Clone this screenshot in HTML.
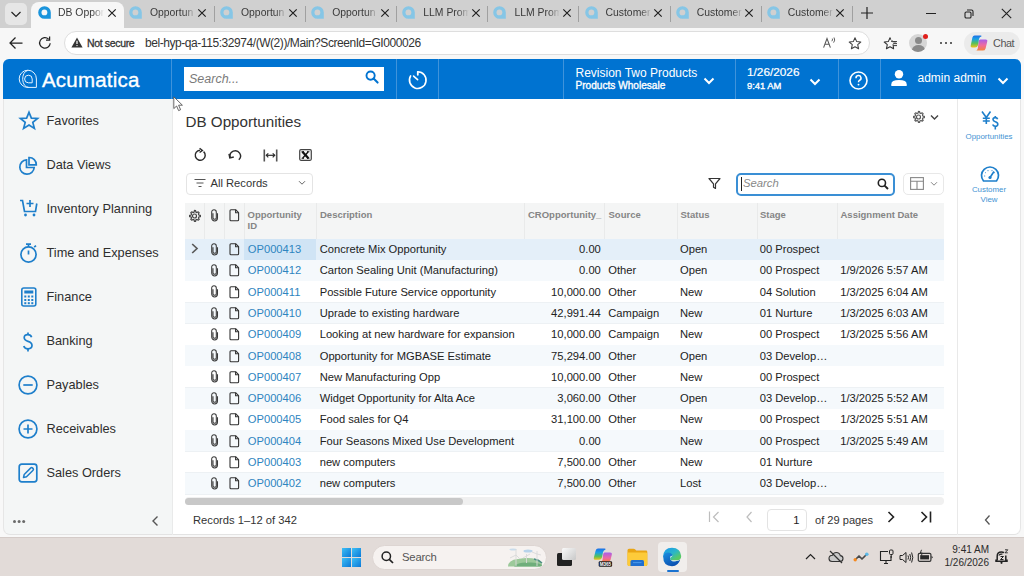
<!DOCTYPE html>
<html><head><meta charset="utf-8">
<style>
*{box-sizing:border-box;margin:0;padding:0}
html,body{width:1024px;height:576px;overflow:hidden;font-family:"Liberation Sans",sans-serif;background:#f8f8f8;position:relative}
.a{position:absolute;white-space:nowrap}
svg.a{overflow:visible}
#tabs{position:absolute;left:0;top:0;width:1024px;height:28px;background:#d0d0d0}
.tabt{font-size:10.4px;color:#3a3a3a;width:46px;overflow:hidden;-webkit-mask-image:linear-gradient(to right,#000 75%,transparent 100%)}
#addr{position:absolute;left:0;top:28px;width:1024px;height:31px;background:#f7f7f7}
#hdr{position:absolute;left:3px;top:59px;width:1018px;height:40px;background:#0073d1;border-radius:6px 6px 0 0}
#side{position:absolute;left:3px;top:99px;width:169.5px;height:436px;background:#f4f6f6;border-radius:0 0 0 7px;border-right:1px solid #e9eaea;border-left:1px solid #e6e6e6;border-bottom:1px solid #e3e3e3}
#main{position:absolute;left:172.5px;top:99px;width:784.5px;height:436px;background:#fff;border-bottom:1px solid #e3e3e3}
#rp{position:absolute;left:957px;top:99px;width:64px;height:436px;background:#fff;border-left:1px solid #e9e9e9;border-right:1px solid #e6e6e6;border-bottom:1px solid #e3e3e3;border-radius:0 0 7px 0}
#task{position:absolute;left:0;top:538px;width:1024px;height:38px;background:#e2dbd8}
.sit{font-size:12.75px;color:#2e2e2e;line-height:15px}
.gh{font-size:9.5px;font-weight:bold;color:#858585;line-height:11px}
.gc{font-size:11.18px;color:#222;line-height:13px}
.lk{color:#2e84c0}
.rpt{font-size:7.9px;color:#3f93d3;line-height:10px}

</style></head><body>
<div id="tabs">
<div class="a" style="left:31px;top:2px;width:93px;height:27px;background:#f7f7f7;border-radius:8px 8px 0 0"></div>
<svg class="a" style="left:37.5px;top:6.0px" width="13" height="13" viewBox="0 0 13 13"><path d="M6.5 0.2A6.3 6.3 0 1 0 6.5 12.8H12.8V6.5A6.3 6.3 0 0 0 6.5 0.2Z" fill="#1a94dc"/><circle cx="6.4" cy="6.4" r="2.9" fill="#f7f7f7"/></svg>
<div class="a tabt" style="left:58px;top:6.5px">DB Oppor</div>
<svg class="a" style="left:106.5px;top:8.0px" width="10" height="10" viewBox="0 0 10 10"><path d="M1.3 1.3L8.7 8.7M8.7 1.3L1.3 8.7" stroke="#1e1e1e" stroke-width="1.15"/></svg>
<svg class="a" style="left:128.9px;top:6.0px" width="13" height="13" viewBox="0 0 13 13"><path d="M6.5 0.2A6.3 6.3 0 1 0 6.5 12.8H12.8V6.5A6.3 6.3 0 0 0 6.5 0.2Z" fill="#86c6e6"/><circle cx="6.4" cy="6.4" r="2.9" fill="#d0d0d0"/></svg>
<div class="a tabt" style="left:149.9px;top:6.5px">Opportun</div>
<svg class="a" style="left:197.2px;top:8.0px" width="10" height="10" viewBox="0 0 10 10"><path d="M1.3 1.3L8.7 8.7M8.7 1.3L1.3 8.7" stroke="#1e1e1e" stroke-width="1.15"/></svg>
<div class="a" style="left:213.9px;top:6px;width:1px;height:16px;background:#a0a0a0"></div>
<svg class="a" style="left:220.0px;top:6.0px" width="13" height="13" viewBox="0 0 13 13"><path d="M6.5 0.2A6.3 6.3 0 1 0 6.5 12.8H12.8V6.5A6.3 6.3 0 0 0 6.5 0.2Z" fill="#86c6e6"/><circle cx="6.4" cy="6.4" r="2.9" fill="#d0d0d0"/></svg>
<div class="a tabt" style="left:241.0px;top:6.5px">Opportun</div>
<svg class="a" style="left:288.3px;top:8.0px" width="10" height="10" viewBox="0 0 10 10"><path d="M1.3 1.3L8.7 8.7M8.7 1.3L1.3 8.7" stroke="#1e1e1e" stroke-width="1.15"/></svg>
<div class="a" style="left:305.0px;top:6px;width:1px;height:16px;background:#a0a0a0"></div>
<svg class="a" style="left:311.2px;top:6.0px" width="13" height="13" viewBox="0 0 13 13"><path d="M6.5 0.2A6.3 6.3 0 1 0 6.5 12.8H12.8V6.5A6.3 6.3 0 0 0 6.5 0.2Z" fill="#86c6e6"/><circle cx="6.4" cy="6.4" r="2.9" fill="#d0d0d0"/></svg>
<div class="a tabt" style="left:332.2px;top:6.5px">Opportun</div>
<svg class="a" style="left:379.5px;top:8.0px" width="10" height="10" viewBox="0 0 10 10"><path d="M1.3 1.3L8.7 8.7M8.7 1.3L1.3 8.7" stroke="#1e1e1e" stroke-width="1.15"/></svg>
<div class="a" style="left:396.2px;top:6px;width:1px;height:16px;background:#a0a0a0"></div>
<svg class="a" style="left:402.3px;top:6.0px" width="13" height="13" viewBox="0 0 13 13"><path d="M6.5 0.2A6.3 6.3 0 1 0 6.5 12.8H12.8V6.5A6.3 6.3 0 0 0 6.5 0.2Z" fill="#86c6e6"/><circle cx="6.4" cy="6.4" r="2.9" fill="#d0d0d0"/></svg>
<div class="a tabt" style="left:423.3px;top:6.5px">LLM Prom</div>
<svg class="a" style="left:470.6px;top:8.0px" width="10" height="10" viewBox="0 0 10 10"><path d="M1.3 1.3L8.7 8.7M8.7 1.3L1.3 8.7" stroke="#1e1e1e" stroke-width="1.15"/></svg>
<div class="a" style="left:487.3px;top:6px;width:1px;height:16px;background:#a0a0a0"></div>
<svg class="a" style="left:493.4px;top:6.0px" width="13" height="13" viewBox="0 0 13 13"><path d="M6.5 0.2A6.3 6.3 0 1 0 6.5 12.8H12.8V6.5A6.3 6.3 0 0 0 6.5 0.2Z" fill="#86c6e6"/><circle cx="6.4" cy="6.4" r="2.9" fill="#d0d0d0"/></svg>
<div class="a tabt" style="left:514.4px;top:6.5px">LLM Prom</div>
<svg class="a" style="left:561.7px;top:8.0px" width="10" height="10" viewBox="0 0 10 10"><path d="M1.3 1.3L8.7 8.7M8.7 1.3L1.3 8.7" stroke="#1e1e1e" stroke-width="1.15"/></svg>
<div class="a" style="left:578.4px;top:6px;width:1px;height:16px;background:#a0a0a0"></div>
<svg class="a" style="left:584.5px;top:6.0px" width="13" height="13" viewBox="0 0 13 13"><path d="M6.5 0.2A6.3 6.3 0 1 0 6.5 12.8H12.8V6.5A6.3 6.3 0 0 0 6.5 0.2Z" fill="#86c6e6"/><circle cx="6.4" cy="6.4" r="2.9" fill="#d0d0d0"/></svg>
<div class="a tabt" style="left:605.5px;top:6.5px">Customer</div>
<svg class="a" style="left:652.8px;top:8.0px" width="10" height="10" viewBox="0 0 10 10"><path d="M1.3 1.3L8.7 8.7M8.7 1.3L1.3 8.7" stroke="#1e1e1e" stroke-width="1.15"/></svg>
<div class="a" style="left:669.5px;top:6px;width:1px;height:16px;background:#a0a0a0"></div>
<svg class="a" style="left:675.7px;top:6.0px" width="13" height="13" viewBox="0 0 13 13"><path d="M6.5 0.2A6.3 6.3 0 1 0 6.5 12.8H12.8V6.5A6.3 6.3 0 0 0 6.5 0.2Z" fill="#86c6e6"/><circle cx="6.4" cy="6.4" r="2.9" fill="#d0d0d0"/></svg>
<div class="a tabt" style="left:696.7px;top:6.5px">Customer</div>
<svg class="a" style="left:744.0px;top:8.0px" width="10" height="10" viewBox="0 0 10 10"><path d="M1.3 1.3L8.7 8.7M8.7 1.3L1.3 8.7" stroke="#1e1e1e" stroke-width="1.15"/></svg>
<div class="a" style="left:760.7px;top:6px;width:1px;height:16px;background:#a0a0a0"></div>
<svg class="a" style="left:766.8px;top:6.0px" width="13" height="13" viewBox="0 0 13 13"><path d="M6.5 0.2A6.3 6.3 0 1 0 6.5 12.8H12.8V6.5A6.3 6.3 0 0 0 6.5 0.2Z" fill="#86c6e6"/><circle cx="6.4" cy="6.4" r="2.9" fill="#d0d0d0"/></svg>
<div class="a tabt" style="left:787.8px;top:6.5px">Customer</div>
<svg class="a" style="left:835.1px;top:8.0px" width="10" height="10" viewBox="0 0 10 10"><path d="M1.3 1.3L8.7 8.7M8.7 1.3L1.3 8.7" stroke="#1e1e1e" stroke-width="1.15"/></svg>
<div class="a" style="left:851.8px;top:6px;width:1px;height:16px;background:#a0a0a0"></div>
<div class="a" style="left:5px;top:3px;width:22px;height:22px;background:#e6e6e6;border-radius:5px"></div>
<svg class="a" style="left:10px;top:9px" width="12" height="10" viewBox="0 0 12 10"><path d="M1.5 3L6 7.5L10.5 3" stroke="#222" stroke-width="1.2" fill="none"/></svg>
<svg class="a" style="left:860px;top:6px" width="14" height="14" viewBox="0 0 14 14"><path d="M7 1V13M1 7H13" stroke="#222" stroke-width="1.2"/></svg>
<div class="a" style="left:926px;top:13px;width:10px;height:1px;background:#222"></div>
<svg class="a" style="left:964px;top:9px" width="10" height="10" viewBox="0 0 10 10"><rect x="1" y="3" width="6" height="6" rx="1.3" stroke="#222" fill="none" stroke-width="1.1"/><path d="M3 1H7.5Q9 1 9 2.5V7" stroke="#222" fill="none" stroke-width="1.1"/></svg>
<svg class="a" style="left:1000.5px;top:8px" width="11" height="11" viewBox="0 0 11 11"><path d="M0.8 0.8L10.2 10.2M10.2 0.8L0.8 10.2" stroke="#222" stroke-width="1.1"/></svg>

</div>
<div id="addr"></div>
<svg class="a" style="left:8px;top:35px" width="16" height="16" viewBox="0 0 16 16"><path d="M14.5 8H2M7.5 2.5L2 8L7.5 13.5" stroke="#222" stroke-width="1.25" fill="none"/></svg>
<svg class="a" style="left:37px;top:35px" width="16" height="16" viewBox="0 0 16 16"><path d="M13.2 8.3A5.3 5.3 0 1 1 11.6 4.1" stroke="#222" stroke-width="1.25" fill="none"/><path d="M12.6 1.6V5.2H9" stroke="#222" stroke-width="1.25" fill="none"/></svg>
<div class="a" style="left:64px;top:31px;width:806px;height:24px;background:#fff;border:1px solid #dedede;border-radius:12px"></div>
<svg class="a" style="left:71px;top:37px" width="12" height="11" viewBox="0 0 12 11"><path d="M6 0.5L11.6 10.5H0.4Z" fill="#333"/><path d="M6 3.8V7" stroke="#fff" stroke-width="1.2"/><circle cx="6" cy="8.6" r="0.7" fill="#fff"/></svg>
<div class="a" style="left:87px;top:37px;font-size:10.5px;color:#333;letter-spacing:-0.35px;-webkit-text-stroke:0.3px #333">Not secure</div>
<div class="a" style="left:145px;top:36px;font-size:12px;color:#333;letter-spacing:-0.44px">bel-hyp-qa-115:32974/(W(2))/Main?ScreenId=GI000026</div>
<svg class="a" style="left:823px;top:38px" width="9" height="10" viewBox="0 0 9 10"><path d="M0.6 9.6L4 0.6L7.4 9.6M1.9 6.3H6.1" stroke="#555" stroke-width="1.05" fill="none"/></svg>
<svg class="a" style="left:830.5px;top:36.5px" width="6" height="7" viewBox="0 0 6 7"><path d="M0.8 4.2Q2 3 1.3 1.6M2.6 5.6Q4.6 3.2 3 0.5" stroke="#555" stroke-width="0.95" fill="none"/></svg>
<svg class="a" style="left:847.5px;top:37px" width="14" height="13" viewBox="0 0 14 13"><path d="M7 0.8L8.7 4.6L12.8 5L9.7 7.7L10.6 11.8L7 9.7L3.4 11.8L4.3 7.7L1.2 5L5.3 4.6Z" stroke="#444" stroke-width="1.05" fill="none" stroke-linejoin="round"/></svg>
<svg class="a" style="left:882.5px;top:37px" width="15" height="13" viewBox="0 0 15 13"><path d="M9.2 3.2L8.7 4.6L12.8 5M10 7.3L10.6 11.8L7 9.7L3.4 11.8L4.3 7.7L1.2 5L5.3 4.6L7 0.8L7.8 2.6" stroke="#333" stroke-width="1.05" fill="none" stroke-linejoin="round"/><path d="M10.2 4.6H14M10.2 6.6H14M10.2 8.6H14" stroke="#333" stroke-width="0.95"/></svg>
<div class="a" style="left:909px;top:34px;width:18px;height:18px;border-radius:50%;background:#d6d6d6;overflow:hidden"><div class="a" style="left:5.5px;top:3px;width:7px;height:7px;border-radius:50%;background:#8a8a8a"></div><div class="a" style="left:2.5px;top:11px;width:13px;height:10px;border-radius:50%;background:#8a8a8a"></div></div>
<div class="a" style="left:922.5px;top:33.5px;width:5px;height:5px;border-radius:50%;background:#e0201c"></div>
<div class="a" style="left:940px;top:42px;width:2.2px;height:2.2px;border-radius:50%;background:#333;box-shadow:5px 0 0 #333,10px 0 0 #333"></div>
<div class="a" style="left:963.5px;top:31.5px;width:56px;height:23px;background:#ebebeb;border-radius:12px"></div>
<svg class="a" style="left:969.5px;top:35px" width="18" height="16" viewBox="0 0 18 16"><defs><linearGradient id="cpa" x1="0" y1="0" x2="0" y2="1"><stop offset="0" stop-color="#1e6fe6"/><stop offset="0.3" stop-color="#1aa0e6"/><stop offset="0.65" stop-color="#56c05a"/><stop offset="1" stop-color="#f2c21a"/></linearGradient><linearGradient id="cpb" x1="0" y1="0" x2="0" y2="1"><stop offset="0" stop-color="#a85ee8"/><stop offset="0.5" stop-color="#ee6aa0"/><stop offset="1" stop-color="#f7823a"/></linearGradient></defs><path d="M10.2 4.6H15.6Q17.8 4.6 17.2 6.8L15.6 13.4Q15 15.6 12.8 15.6H5.4Q7.2 15.6 7.8 13.4L8.6 6.2Q9 4.6 10.2 4.6Z" fill="url(#cpb)"/><path d="M4.6 0.4H10.6Q12 0.4 11.4 1.6Q9.6 1.8 9 4L8 10.2Q7.4 12.4 5 12.4H2.4Q0.2 12.4 0.8 10.2L2.4 2.6Q3 0.4 4.6 0.4Z" fill="url(#cpa)"/></svg>
<div class="a" style="left:993px;top:37px;font-size:10.8px;color:#555;letter-spacing:-0.4px">Chat</div>

<div id="hdr"></div>
<svg class="a" style="left:18px;top:68.5px" width="20" height="20" viewBox="0 0 20 20"><g stroke="#e8f4ff" stroke-width="1" fill="none"><path d="M18.4 18.4H10A8.6 8.6 0 1 1 18.4 10Z"/><path d="M9.8 1.5A5.4 8.3 0 0 0 10.5 18.3"/><path d="M14.2 13.8H10.4A3.8 3.8 0 1 1 14.2 10Z"/></g></svg>
<div class="a" style="left:42px;top:67.5px;font-size:20.5px;color:#fff;letter-spacing:0.2px;-webkit-text-stroke:0.35px #fff">Acumatica</div>
<div class="a" style="left:171px;top:59px;width:1px;height:40px;background:#3f93db"></div>
<div class="a" style="left:184px;top:66.5px;width:200px;height:24.5px;background:#fff"></div>
<div class="a" style="left:189px;top:72px;font-size:12.5px;font-style:italic;color:#7a7a7a">Search...</div>
<svg class="a" style="left:365px;top:70px" width="14" height="14" viewBox="0 0 14 14"><circle cx="5.6" cy="5.6" r="4.1" stroke="#0073d1" stroke-width="1.9" fill="none"/><path d="M8.6 8.6L12.6 12.6" stroke="#0073d1" stroke-width="2.1" stroke-linecap="round"/></svg>
<div class="a" style="left:396px;top:59px;width:1px;height:40px;background:#3f93db"></div>
<svg class="a" style="left:406.8px;top:69.2px" width="22" height="22" viewBox="0 0 22 22"><path d="M3.6 6.9A8.3 8.3 0 1 0 10.8 2.8" stroke="#fff" stroke-width="1.6" fill="none" stroke-linecap="round"/><path d="M10.8 2.8V5.8" stroke="#fff" stroke-width="1.8" stroke-linecap="round"/><path d="M6.6 7.1L10.6 10.6" stroke="#fff" stroke-width="1.6" stroke-linecap="round"/></svg>
<div class="a" style="left:438px;top:59px;width:1px;height:40px;background:#3f93db"></div>
<div class="a" style="left:563px;top:59px;width:1px;height:40px;background:#3f93db"></div>
<div class="a" style="left:575.5px;top:66px;font-size:12px;color:#fff">Revision Two Products</div>
<div class="a" style="left:575.5px;top:79.6px;font-size:10.1px;color:#fff;-webkit-text-stroke:0.35px #fff">Products Wholesale</div>
<svg class="a" style="left:703px;top:77px" width="12" height="8" viewBox="0 0 12 8"><path d="M1.5 1.5L6 6L10.5 1.5" stroke="#fff" stroke-width="2" fill="none"/></svg>
<div class="a" style="left:734.5px;top:59px;width:1px;height:40px;background:#3f93db"></div>
<div class="a" style="left:747px;top:65.2px;font-size:11.8px;color:#fff;-webkit-text-stroke:0.2px #fff">1/26/2026</div>
<div class="a" style="left:747px;top:80.3px;font-size:9.4px;color:#fff;-webkit-text-stroke:0.35px #fff">9:41 AM</div>
<svg class="a" style="left:809px;top:77.5px" width="12" height="8" viewBox="0 0 12 8"><path d="M1.5 1.5L6 6L10.5 1.5" stroke="#fff" stroke-width="2" fill="none"/></svg>
<div class="a" style="left:837.5px;top:59px;width:1px;height:40px;background:#3f93db"></div>
<svg class="a" style="left:848px;top:69.5px" width="21" height="21" viewBox="0 0 21 21"><circle cx="10.5" cy="10.5" r="8.5" stroke="#fff" stroke-width="1.6" fill="none"/><path d="M8 8.2A2.5 2.5 0 1 1 11.4 10.4Q10.5 10.9 10.5 12.2" stroke="#fff" stroke-width="1.5" fill="none"/><circle cx="10.5" cy="14.6" r="0.95" fill="#fff"/></svg>
<div class="a" style="left:879.5px;top:59px;width:1px;height:40px;background:#3f93db"></div>
<svg class="a" style="left:890px;top:69px" width="18" height="18" viewBox="0 0 18 18"><circle cx="9" cy="5.3" r="4.2" fill="#fff"/><path d="M1.3 17V15.2Q1.3 11 9 11Q16.7 11 16.7 15.2V17Z" fill="#fff"/></svg>
<div class="a" style="left:917.5px;top:71px;font-size:12px;color:#fff">admin admin</div>
<svg class="a" style="left:997px;top:76.5px" width="12" height="8" viewBox="0 0 12 8"><path d="M1.5 1.5L6 6L10.5 1.5" stroke="#fff" stroke-width="2" fill="none"/></svg>

<div id="side"></div>
<div class="a sit" style="left:46.5px;top:112.9px">Favorites</div>
<svg class="a" style="left:18.5px;top:110.8px" width="20" height="20" viewBox="0 0 20 20"><path d="M10 1.3L12.4 7.1L18.6 7.5L13.8 11.4L15.4 17.5L10 14.1L4.6 17.5L6.2 11.4L1.4 7.5L7.6 7.1Z" stroke="#1e7fcb" stroke-width="1.7" fill="none" stroke-linejoin="miter"/></svg>
<div class="a sit" style="left:46.5px;top:156.9px">Data Views</div>
<svg class="a" style="left:17.6px;top:155.5px" width="20" height="20" viewBox="0 0 20 20"><path d="M8.5 3.8A7.2 7.2 0 1 0 16.2 11.5H8.5Z" stroke="#1e7fcb" stroke-width="1.7" fill="none"/><path d="M11 1.5A7 7 0 0 1 18.3 8.8H11Z" stroke="#1e7fcb" stroke-width="1.7" fill="none"/></svg>
<div class="a sit" style="left:46.5px;top:200.9px">Inventory Planning</div>
<svg class="a" style="left:18.5px;top:198px" width="20" height="20" viewBox="0 0 20 20"><path d="M1 2.5H3.5L5.5 13.5H16.5L17.8 5.5" stroke="#1e7fcb" stroke-width="1.7" fill="none"/><path d="M11 2V9M7.5 5.5H14.5" stroke="#1e7fcb" stroke-width="1.7"/><circle cx="6.5" cy="17" r="1.4" fill="#1e7fcb"/><circle cx="15" cy="17" r="1.4" fill="#1e7fcb"/></svg>
<div class="a sit" style="left:46.5px;top:244.9px">Time and Expenses</div>
<svg class="a" style="left:19px;top:243px" width="20" height="20" viewBox="0 0 20 20"><circle cx="9.5" cy="11.5" r="7.6" stroke="#1e7fcb" stroke-width="1.7" fill="none"/><path d="M7 1.2H12M9.5 1.2V3.9M9.5 7.5V11.5M15.2 4.2L17 2.6" stroke="#1e7fcb" stroke-width="1.7"/></svg>
<div class="a sit" style="left:46.5px;top:288.9px">Finance</div>
<svg class="a" style="left:18.5px;top:286.5px" width="20" height="20" viewBox="0 0 20 20"><rect x="2.8" y="1" width="14" height="18" rx="2" stroke="#1e7fcb" stroke-width="1.6" fill="none"/><rect x="5.3" y="3.5" width="9" height="3" fill="#1e7fcb"/><g fill="#1e7fcb"><rect x="5.3" y="8.5" width="2" height="2"/><rect x="8.8" y="8.5" width="2" height="2"/><rect x="12.3" y="8.5" width="2" height="2"/><rect x="5.3" y="12" width="2" height="2"/><rect x="8.8" y="12" width="2" height="2"/><rect x="12.3" y="12" width="2" height="2"/><rect x="5.3" y="15.2" width="2" height="2"/><rect x="8.8" y="15.2" width="2" height="2"/><rect x="12.3" y="15.2" width="2" height="2"/></g></svg>
<div class="a sit" style="left:46.5px;top:332.9px">Banking</div>
<svg class="a" style="left:18px;top:331.5px" width="20" height="20" viewBox="0 0 20 20"><path d="M13.6 5.2Q12.8 2.6 9.8 2.6Q6.2 2.6 6.2 5.6Q6.2 8.3 10 9.4Q14 10.6 14 13.6Q14 16.8 10 16.8Q6.6 16.8 5.8 14" stroke="#1e7fcb" stroke-width="1.7" fill="none"/><path d="M10 0.5V2.6M10 16.8V19.5" stroke="#1e7fcb" stroke-width="1.7"/></svg>
<div class="a sit" style="left:46.5px;top:376.9px">Payables</div>
<svg class="a" style="left:18px;top:375.3px" width="20" height="20" viewBox="0 0 20 20"><circle cx="10" cy="10" r="8.9" stroke="#1e7fcb" stroke-width="1.7" fill="none"/><path d="M5.3 10H14.7" stroke="#1e7fcb" stroke-width="1.7"/></svg>
<div class="a sit" style="left:46.5px;top:420.9px">Receivables</div>
<svg class="a" style="left:18px;top:419px" width="20" height="20" viewBox="0 0 20 20"><circle cx="10" cy="10" r="8.9" stroke="#1e7fcb" stroke-width="1.7" fill="none"/><path d="M5.5 10H14.5M10 5.5V14.5" stroke="#1e7fcb" stroke-width="1.7"/></svg>
<div class="a sit" style="left:46.5px;top:464.9px">Sales Orders</div>
<svg class="a" style="left:18px;top:462.8px" width="20" height="20" viewBox="0 0 20 20"><rect x="1.2" y="1.2" width="17.6" height="17.6" rx="2.5" stroke="#1e7fcb" stroke-width="1.7" fill="none"/><path d="M5.5 14.5L6.2 11.5L12.8 4.9Q13.6 4.1 14.4 4.9L15.1 5.6Q15.9 6.4 15.1 7.2L8.5 13.8Z" stroke="#1e7fcb" stroke-width="1.5" fill="none" stroke-linejoin="round"/></svg>
<div class="a" style="left:13px;top:519.6px;width:3.3px;height:3.3px;border-radius:50%;background:#6a6a6a;box-shadow:4.6px 0 0 #6a6a6a,9.2px 0 0 #6a6a6a"></div>
<svg class="a" style="left:150px;top:515px" width="10" height="12" viewBox="0 0 10 12"><path d="M7.5 1.5L3 6L7.5 10.5" stroke="#555" stroke-width="1.4" fill="none"/></svg>

<div id="main"></div>
<div class="a" style="left:185.5px;top:112.5px;font-size:15.2px;color:#333">DB Opportunities</div>
<svg class="a" style="left:193.5px;top:147.5px" width="13" height="14" viewBox="0 0 13 14"><path d="M9.6 3.6A5 5 0 1 1 6 2.3" stroke="#2b2b2b" stroke-width="1.45" fill="none"/><path d="M5.6 0.3L8.4 2.4L5.6 4.5" stroke="#2b2b2b" stroke-width="1.4" fill="none"/></svg>
<svg class="a" style="left:228px;top:148.5px" width="14" height="12" viewBox="0 0 14 12"><path d="M2.2 8.2A5.2 5.2 0 1 1 10.8 10.8" stroke="#2b2b2b" stroke-width="1.4" fill="none"/><path d="M1 4.8L1.8 9L5.8 8" stroke="#2b2b2b" stroke-width="1.4" fill="none"/></svg>
<svg class="a" style="left:262.5px;top:148.5px" width="15" height="13" viewBox="0 0 15 13"><path d="M1.3 0.5V12.5M13.7 0.5V12.5" stroke="#555" stroke-width="1.6" fill="none"/><path d="M3.5 6.3H11.5" stroke="#2b2b2b" stroke-width="1.2"/><path d="M5.3 4.3L3.3 6.3L5.3 8.3M9.7 4.3L11.7 6.3L9.7 8.3" stroke="#2b2b2b" stroke-width="1.2" fill="none"/></svg>
<svg class="a" style="left:298.5px;top:148.5px" width="13" height="12" viewBox="0 0 13 12"><rect x="0.7" y="0.7" width="11.6" height="10.6" rx="1.2" stroke="#444" stroke-width="1.2" fill="#f4f4f4"/><path d="M3.4 2.8L9.4 9.2" stroke="#111" stroke-width="2.3"/><path d="M9.2 2.8L3.6 9.2" stroke="#111" stroke-width="1.3"/><path d="M2.5 2.7H5M8 2.7H10.4M2.6 9.3H5M8 9.3H10.4" stroke="#111" stroke-width="0.9"/></svg>
<div class="a" style="left:185.5px;top:172.5px;width:127.5px;height:22px;border:1px solid #e4e4e4;border-radius:4px;background:#fff"></div>
<svg class="a" style="left:194px;top:178px" width="12" height="11" viewBox="0 0 12 11"><path d="M0.5 1.5H11.5M2.5 5H9.5M4.5 8.5H7.5" stroke="#555" stroke-width="1.2"/></svg>
<div class="a" style="left:210.5px;top:176.5px;font-size:11.2px;color:#333">All Records</div>
<svg class="a" style="left:298px;top:180px" width="8" height="6" viewBox="0 0 8 6"><path d="M1 1.2L4 4.2L7 1.2" stroke="#666" stroke-width="1" fill="none"/></svg>
<svg class="a" style="left:911.5px;top:110px" width="14" height="14" viewBox="0 0 14 14"><path d="M7 0.9L8.1 1.1L8.4 2.6L9.4 3.1L10.7 2.3L11.6 3.2L10.9 4.5L11.4 5.6L12.9 5.9V7.1L11.4 7.4L10.9 8.5L11.7 9.8L10.8 10.7L9.5 9.9L8.4 10.4L8.1 11.9H6.9L6.6 10.4L5.5 9.9L4.2 10.7L3.3 9.8L4.1 8.5L3.6 7.4L2.1 7.1V5.9L3.6 5.6L4.1 4.5L3.3 3.2L4.2 2.3L5.5 3.1L6.6 2.6L6.9 1.1Z" transform="translate(-0.5,0.5)" stroke="#555" stroke-width="1.15" fill="none" stroke-linejoin="round"/><circle cx="6.5" cy="7" r="2" stroke="#555" stroke-width="1.15" fill="none"/></svg>
<svg class="a" style="left:930px;top:114px" width="9" height="7" viewBox="0 0 9 7"><path d="M1 1.5L4.5 5L8 1.5" stroke="#444" stroke-width="1.4" fill="none"/></svg>
<svg class="a" style="left:708px;top:177px" width="13" height="13" viewBox="0 0 13 13"><path d="M1 1.5H12L7.5 6.8V11.5L5.5 10.3V6.8Z" stroke="#333" stroke-width="1.2" fill="none" stroke-linejoin="round"/></svg>
<div class="a" style="left:735.5px;top:172.5px;width:159.5px;height:23.5px;border:2px solid #3a8fd5;border-radius:5px;background:#fff"></div>
<div class="a" style="left:741px;top:177px;width:1px;height:14px;background:#222"></div>
<div class="a" style="left:743px;top:177px;font-size:11.3px;font-style:italic;color:#888">Search</div>
<svg class="a" style="left:877px;top:177.5px" width="12" height="12" viewBox="0 0 12 12"><circle cx="4.9" cy="4.9" r="3.6" stroke="#222" stroke-width="1.6" fill="none"/><path d="M7.6 7.6L11 11" stroke="#222" stroke-width="1.9"/></svg>
<div class="a" style="left:902.5px;top:173px;width:41px;height:21.5px;border:1px solid #e8e8e8;border-radius:5px;background:#fff"></div>
<svg class="a" style="left:909.5px;top:177px" width="14" height="13" viewBox="0 0 14 13"><rect x="0.6" y="0.6" width="12.8" height="11.8" stroke="#888" stroke-width="1.1" fill="none"/><path d="M0.6 4.2H13.4M7 4.2V12.4" stroke="#888" stroke-width="1.1"/></svg>
<svg class="a" style="left:929.5px;top:181px" width="8" height="6" viewBox="0 0 8 6"><path d="M1 1.2L4 4.2L7 1.2" stroke="#888" stroke-width="1" fill="none"/></svg>
<div class="a" style="left:185px;top:203px;width:758.5px;height:35.80000000000001px;background:#f4f5f5"></div>
<div class="a" style="left:204px;top:203px;width:1px;height:35.80000000000001px;background:#e9eaea"></div>
<div class="a" style="left:224px;top:203px;width:1px;height:35.80000000000001px;background:#e9eaea"></div>
<div class="a" style="left:244px;top:203px;width:1px;height:35.80000000000001px;background:#e9eaea"></div>
<div class="a" style="left:316px;top:203px;width:1px;height:35.80000000000001px;background:#e9eaea"></div>
<div class="a" style="left:524px;top:203px;width:1px;height:35.80000000000001px;background:#e9eaea"></div>
<div class="a" style="left:604px;top:203px;width:1px;height:35.80000000000001px;background:#e9eaea"></div>
<div class="a" style="left:677px;top:203px;width:1px;height:35.80000000000001px;background:#e9eaea"></div>
<div class="a" style="left:756.5px;top:203px;width:1px;height:35.80000000000001px;background:#e9eaea"></div>
<div class="a" style="left:836.5px;top:203px;width:1px;height:35.80000000000001px;background:#e9eaea"></div>
<div class="a gh" style="left:247.5px;top:209px">Opportunity<br>ID</div>
<div class="a gh" style="left:320px;top:209px">Description</div>
<div class="a gh" style="left:528px;top:209px">CROpportunity_</div>
<div class="a gh" style="left:608.5px;top:209px">Source</div>
<div class="a gh" style="left:680.5px;top:209px">Status</div>
<div class="a gh" style="left:760px;top:209px">Stage</div>
<div class="a gh" style="left:840.5px;top:209px">Assignment Date</div>
<svg class="a" style="left:188px;top:208.5px" width="14" height="14" viewBox="0 0 14 14"><path d="M7 0.9L8.1 1.1L8.4 2.6L9.4 3.1L10.7 2.3L11.6 3.2L10.9 4.5L11.4 5.6L12.9 5.9V7.1L11.4 7.4L10.9 8.5L11.7 9.8L10.8 10.7L9.5 9.9L8.4 10.4L8.1 11.9H6.9L6.6 10.4L5.5 9.9L4.2 10.7L3.3 9.8L4.1 8.5L3.6 7.4L2.1 7.1V5.9L3.6 5.6L4.1 4.5L3.3 3.2L4.2 2.3L5.5 3.1L6.6 2.6L6.9 1.1Z" transform="translate(-0.5,0.5)" stroke="#444" stroke-width="1.2" fill="none" stroke-linejoin="round"/><circle cx="6.5" cy="7" r="2" stroke="#444" stroke-width="1.2" fill="none"/></svg>
<svg class="a" style="left:210.6px;top:208.5px" width="8" height="13" viewBox="0 0 8 13"><path d="M6.5 4.2V9A2.9 2.9 0 0 1 0.7 9V3.1A2.3 2.3 0 0 1 5.3 3.1V8.7A1.65 1.65 0 0 1 2 8.7V4.2" stroke="#3a3a3a" stroke-width="1.05" fill="none"/></svg>
<svg class="a" style="left:228.6px;top:209px" width="11" height="12" viewBox="0 0 11 12"><path d="M2 0.7H6.6L9.6 3.7V10.8Q9.6 11.8 8.6 11.8H2Q1 11.8 1 10.8V1.7Q1 0.7 2 0.7Z" stroke="#333" stroke-width="1.1" fill="none" stroke-linejoin="round"/><path d="M6.6 0.7V3.7H9.6" stroke="#333" stroke-width="1.1" fill="none"/></svg>
<div class="a" style="left:185px;top:238.80px;width:758.5px;height:21.78px;background:#e4eff9;border-bottom:1px solid #edf1f4"></div>
<div class="a" style="left:244px;top:238.80px;width:72px;height:21.28px;background:#d0e4f5"></div>
<svg class="a" style="left:190px;top:243.40px" width="9" height="11" viewBox="0 0 9 11"><path d="M2.2 1L7 5.5L2.2 10" stroke="#5a5a5a" stroke-width="1.7" fill="none"/></svg>
<svg class="a" style="left:210.6px;top:242.70px" width="8" height="13" viewBox="0 0 8 13"><path d="M6.5 4.2V9A2.9 2.9 0 0 1 0.7 9V3.1A2.3 2.3 0 0 1 5.3 3.1V8.7A1.65 1.65 0 0 1 2 8.7V4.2" stroke="#3a3a3a" stroke-width="1.05" fill="none"/></svg>
<svg class="a" style="left:228.6px;top:243.20px" width="11" height="12" viewBox="0 0 11 12"><path d="M2 0.7H6.6L9.6 3.7V10.8Q9.6 11.8 8.6 11.8H2Q1 11.8 1 10.8V1.7Q1 0.7 2 0.7Z" stroke="#333" stroke-width="1.1" fill="none" stroke-linejoin="round"/><path d="M6.6 0.7V3.7H9.6" stroke="#333" stroke-width="1.1" fill="none"/></svg>
<div class="a gc lk" style="left:247.8px;top:243.10px">OP000413</div>
<div class="a gc" style="left:319.7px;top:243.10px">Concrete Mix Opportunity</div>
<div class="a gc" style="right:423.2px;top:243.10px">0.00</div>
<div class="a gc" style="left:608.3px;top:243.10px"></div>
<div class="a gc" style="left:680px;top:243.10px">Open</div>
<div class="a gc" style="left:759.7px;top:243.10px">00 Prospect</div>
<div class="a gc" style="left:840.2px;top:243.10px"></div>
<div class="a" style="left:185px;top:260.08px;width:758.5px;height:21.78px;background:#f5f9fc;border-bottom:1px solid #edf1f4"></div>
<svg class="a" style="left:210.6px;top:263.98px" width="8" height="13" viewBox="0 0 8 13"><path d="M6.5 4.2V9A2.9 2.9 0 0 1 0.7 9V3.1A2.3 2.3 0 0 1 5.3 3.1V8.7A1.65 1.65 0 0 1 2 8.7V4.2" stroke="#3a3a3a" stroke-width="1.05" fill="none"/></svg>
<svg class="a" style="left:228.6px;top:264.48px" width="11" height="12" viewBox="0 0 11 12"><path d="M2 0.7H6.6L9.6 3.7V10.8Q9.6 11.8 8.6 11.8H2Q1 11.8 1 10.8V1.7Q1 0.7 2 0.7Z" stroke="#333" stroke-width="1.1" fill="none" stroke-linejoin="round"/><path d="M6.6 0.7V3.7H9.6" stroke="#333" stroke-width="1.1" fill="none"/></svg>
<div class="a gc lk" style="left:247.8px;top:264.38px">OP000412</div>
<div class="a gc" style="left:319.7px;top:264.38px">Carton Sealing Unit (Manufacturing)</div>
<div class="a gc" style="right:423.2px;top:264.38px">0.00</div>
<div class="a gc" style="left:608.3px;top:264.38px">Other</div>
<div class="a gc" style="left:680px;top:264.38px">Open</div>
<div class="a gc" style="left:759.7px;top:264.38px">00 Prospect</div>
<div class="a gc" style="left:840.2px;top:264.38px">1/9/2026 5:57 AM</div>
<div class="a" style="left:185px;top:281.36px;width:758.5px;height:21.78px;background:#ffffff;border-bottom:1px solid #edf1f4"></div>
<svg class="a" style="left:210.6px;top:285.26px" width="8" height="13" viewBox="0 0 8 13"><path d="M6.5 4.2V9A2.9 2.9 0 0 1 0.7 9V3.1A2.3 2.3 0 0 1 5.3 3.1V8.7A1.65 1.65 0 0 1 2 8.7V4.2" stroke="#3a3a3a" stroke-width="1.05" fill="none"/></svg>
<svg class="a" style="left:228.6px;top:285.76px" width="11" height="12" viewBox="0 0 11 12"><path d="M2 0.7H6.6L9.6 3.7V10.8Q9.6 11.8 8.6 11.8H2Q1 11.8 1 10.8V1.7Q1 0.7 2 0.7Z" stroke="#333" stroke-width="1.1" fill="none" stroke-linejoin="round"/><path d="M6.6 0.7V3.7H9.6" stroke="#333" stroke-width="1.1" fill="none"/></svg>
<div class="a gc lk" style="left:247.8px;top:285.66px">OP000411</div>
<div class="a gc" style="left:319.7px;top:285.66px">Possible Future Service opportunity</div>
<div class="a gc" style="right:423.2px;top:285.66px">10,000.00</div>
<div class="a gc" style="left:608.3px;top:285.66px">Other</div>
<div class="a gc" style="left:680px;top:285.66px">New</div>
<div class="a gc" style="left:759.7px;top:285.66px">04 Solution</div>
<div class="a gc" style="left:840.2px;top:285.66px">1/3/2025 6:04 AM</div>
<div class="a" style="left:185px;top:302.64px;width:758.5px;height:21.78px;background:#f5f9fc;border-bottom:1px solid #edf1f4"></div>
<svg class="a" style="left:210.6px;top:306.54px" width="8" height="13" viewBox="0 0 8 13"><path d="M6.5 4.2V9A2.9 2.9 0 0 1 0.7 9V3.1A2.3 2.3 0 0 1 5.3 3.1V8.7A1.65 1.65 0 0 1 2 8.7V4.2" stroke="#3a3a3a" stroke-width="1.05" fill="none"/></svg>
<svg class="a" style="left:228.6px;top:307.04px" width="11" height="12" viewBox="0 0 11 12"><path d="M2 0.7H6.6L9.6 3.7V10.8Q9.6 11.8 8.6 11.8H2Q1 11.8 1 10.8V1.7Q1 0.7 2 0.7Z" stroke="#333" stroke-width="1.1" fill="none" stroke-linejoin="round"/><path d="M6.6 0.7V3.7H9.6" stroke="#333" stroke-width="1.1" fill="none"/></svg>
<div class="a gc lk" style="left:247.8px;top:306.94px">OP000410</div>
<div class="a gc" style="left:319.7px;top:306.94px">Uprade to existing hardware</div>
<div class="a gc" style="right:423.2px;top:306.94px">42,991.44</div>
<div class="a gc" style="left:608.3px;top:306.94px">Campaign</div>
<div class="a gc" style="left:680px;top:306.94px">New</div>
<div class="a gc" style="left:759.7px;top:306.94px">01 Nurture</div>
<div class="a gc" style="left:840.2px;top:306.94px">1/3/2025 6:03 AM</div>
<div class="a" style="left:185px;top:323.92px;width:758.5px;height:21.78px;background:#ffffff;border-bottom:1px solid #edf1f4"></div>
<svg class="a" style="left:210.6px;top:327.82px" width="8" height="13" viewBox="0 0 8 13"><path d="M6.5 4.2V9A2.9 2.9 0 0 1 0.7 9V3.1A2.3 2.3 0 0 1 5.3 3.1V8.7A1.65 1.65 0 0 1 2 8.7V4.2" stroke="#3a3a3a" stroke-width="1.05" fill="none"/></svg>
<svg class="a" style="left:228.6px;top:328.32px" width="11" height="12" viewBox="0 0 11 12"><path d="M2 0.7H6.6L9.6 3.7V10.8Q9.6 11.8 8.6 11.8H2Q1 11.8 1 10.8V1.7Q1 0.7 2 0.7Z" stroke="#333" stroke-width="1.1" fill="none" stroke-linejoin="round"/><path d="M6.6 0.7V3.7H9.6" stroke="#333" stroke-width="1.1" fill="none"/></svg>
<div class="a gc lk" style="left:247.8px;top:328.22px">OP000409</div>
<div class="a gc" style="left:319.7px;top:328.22px">Looking at new hardware for expansion</div>
<div class="a gc" style="right:423.2px;top:328.22px">10,000.00</div>
<div class="a gc" style="left:608.3px;top:328.22px">Campaign</div>
<div class="a gc" style="left:680px;top:328.22px">New</div>
<div class="a gc" style="left:759.7px;top:328.22px">00 Prospect</div>
<div class="a gc" style="left:840.2px;top:328.22px">1/3/2025 5:56 AM</div>
<div class="a" style="left:185px;top:345.20px;width:758.5px;height:21.78px;background:#f5f9fc;border-bottom:1px solid #edf1f4"></div>
<svg class="a" style="left:210.6px;top:349.10px" width="8" height="13" viewBox="0 0 8 13"><path d="M6.5 4.2V9A2.9 2.9 0 0 1 0.7 9V3.1A2.3 2.3 0 0 1 5.3 3.1V8.7A1.65 1.65 0 0 1 2 8.7V4.2" stroke="#3a3a3a" stroke-width="1.05" fill="none"/></svg>
<svg class="a" style="left:228.6px;top:349.60px" width="11" height="12" viewBox="0 0 11 12"><path d="M2 0.7H6.6L9.6 3.7V10.8Q9.6 11.8 8.6 11.8H2Q1 11.8 1 10.8V1.7Q1 0.7 2 0.7Z" stroke="#333" stroke-width="1.1" fill="none" stroke-linejoin="round"/><path d="M6.6 0.7V3.7H9.6" stroke="#333" stroke-width="1.1" fill="none"/></svg>
<div class="a gc lk" style="left:247.8px;top:349.50px">OP000408</div>
<div class="a gc" style="left:319.7px;top:349.50px">Opportunity for MGBASE Estimate</div>
<div class="a gc" style="right:423.2px;top:349.50px">75,294.00</div>
<div class="a gc" style="left:608.3px;top:349.50px">Other</div>
<div class="a gc" style="left:680px;top:349.50px">Open</div>
<div class="a gc" style="left:759.7px;top:349.50px">03 Develop…</div>
<div class="a gc" style="left:840.2px;top:349.50px"></div>
<div class="a" style="left:185px;top:366.48px;width:758.5px;height:21.78px;background:#ffffff;border-bottom:1px solid #edf1f4"></div>
<svg class="a" style="left:210.6px;top:370.38px" width="8" height="13" viewBox="0 0 8 13"><path d="M6.5 4.2V9A2.9 2.9 0 0 1 0.7 9V3.1A2.3 2.3 0 0 1 5.3 3.1V8.7A1.65 1.65 0 0 1 2 8.7V4.2" stroke="#3a3a3a" stroke-width="1.05" fill="none"/></svg>
<svg class="a" style="left:228.6px;top:370.88px" width="11" height="12" viewBox="0 0 11 12"><path d="M2 0.7H6.6L9.6 3.7V10.8Q9.6 11.8 8.6 11.8H2Q1 11.8 1 10.8V1.7Q1 0.7 2 0.7Z" stroke="#333" stroke-width="1.1" fill="none" stroke-linejoin="round"/><path d="M6.6 0.7V3.7H9.6" stroke="#333" stroke-width="1.1" fill="none"/></svg>
<div class="a gc lk" style="left:247.8px;top:370.78px">OP000407</div>
<div class="a gc" style="left:319.7px;top:370.78px">New Manufacturing Opp</div>
<div class="a gc" style="right:423.2px;top:370.78px">10,000.00</div>
<div class="a gc" style="left:608.3px;top:370.78px">Other</div>
<div class="a gc" style="left:680px;top:370.78px">New</div>
<div class="a gc" style="left:759.7px;top:370.78px">00 Prospect</div>
<div class="a gc" style="left:840.2px;top:370.78px"></div>
<div class="a" style="left:185px;top:387.76px;width:758.5px;height:21.78px;background:#f5f9fc;border-bottom:1px solid #edf1f4"></div>
<svg class="a" style="left:210.6px;top:391.66px" width="8" height="13" viewBox="0 0 8 13"><path d="M6.5 4.2V9A2.9 2.9 0 0 1 0.7 9V3.1A2.3 2.3 0 0 1 5.3 3.1V8.7A1.65 1.65 0 0 1 2 8.7V4.2" stroke="#3a3a3a" stroke-width="1.05" fill="none"/></svg>
<svg class="a" style="left:228.6px;top:392.16px" width="11" height="12" viewBox="0 0 11 12"><path d="M2 0.7H6.6L9.6 3.7V10.8Q9.6 11.8 8.6 11.8H2Q1 11.8 1 10.8V1.7Q1 0.7 2 0.7Z" stroke="#333" stroke-width="1.1" fill="none" stroke-linejoin="round"/><path d="M6.6 0.7V3.7H9.6" stroke="#333" stroke-width="1.1" fill="none"/></svg>
<div class="a gc lk" style="left:247.8px;top:392.06px">OP000406</div>
<div class="a gc" style="left:319.7px;top:392.06px">Widget Opportunity for Alta Ace</div>
<div class="a gc" style="right:423.2px;top:392.06px">3,060.00</div>
<div class="a gc" style="left:608.3px;top:392.06px">Other</div>
<div class="a gc" style="left:680px;top:392.06px">Open</div>
<div class="a gc" style="left:759.7px;top:392.06px">03 Develop…</div>
<div class="a gc" style="left:840.2px;top:392.06px">1/3/2025 5:52 AM</div>
<div class="a" style="left:185px;top:409.04px;width:758.5px;height:21.78px;background:#ffffff;border-bottom:1px solid #edf1f4"></div>
<svg class="a" style="left:210.6px;top:412.94px" width="8" height="13" viewBox="0 0 8 13"><path d="M6.5 4.2V9A2.9 2.9 0 0 1 0.7 9V3.1A2.3 2.3 0 0 1 5.3 3.1V8.7A1.65 1.65 0 0 1 2 8.7V4.2" stroke="#3a3a3a" stroke-width="1.05" fill="none"/></svg>
<svg class="a" style="left:228.6px;top:413.44px" width="11" height="12" viewBox="0 0 11 12"><path d="M2 0.7H6.6L9.6 3.7V10.8Q9.6 11.8 8.6 11.8H2Q1 11.8 1 10.8V1.7Q1 0.7 2 0.7Z" stroke="#333" stroke-width="1.1" fill="none" stroke-linejoin="round"/><path d="M6.6 0.7V3.7H9.6" stroke="#333" stroke-width="1.1" fill="none"/></svg>
<div class="a gc lk" style="left:247.8px;top:413.34px">OP000405</div>
<div class="a gc" style="left:319.7px;top:413.34px">Food sales for Q4</div>
<div class="a gc" style="right:423.2px;top:413.34px">31,100.00</div>
<div class="a gc" style="left:608.3px;top:413.34px">Other</div>
<div class="a gc" style="left:680px;top:413.34px">New</div>
<div class="a gc" style="left:759.7px;top:413.34px">00 Prospect</div>
<div class="a gc" style="left:840.2px;top:413.34px">1/3/2025 5:51 AM</div>
<div class="a" style="left:185px;top:430.32px;width:758.5px;height:21.78px;background:#f5f9fc;border-bottom:1px solid #edf1f4"></div>
<svg class="a" style="left:210.6px;top:434.22px" width="8" height="13" viewBox="0 0 8 13"><path d="M6.5 4.2V9A2.9 2.9 0 0 1 0.7 9V3.1A2.3 2.3 0 0 1 5.3 3.1V8.7A1.65 1.65 0 0 1 2 8.7V4.2" stroke="#3a3a3a" stroke-width="1.05" fill="none"/></svg>
<svg class="a" style="left:228.6px;top:434.72px" width="11" height="12" viewBox="0 0 11 12"><path d="M2 0.7H6.6L9.6 3.7V10.8Q9.6 11.8 8.6 11.8H2Q1 11.8 1 10.8V1.7Q1 0.7 2 0.7Z" stroke="#333" stroke-width="1.1" fill="none" stroke-linejoin="round"/><path d="M6.6 0.7V3.7H9.6" stroke="#333" stroke-width="1.1" fill="none"/></svg>
<div class="a gc lk" style="left:247.8px;top:434.62px">OP000404</div>
<div class="a gc" style="left:319.7px;top:434.62px">Four Seasons Mixed Use Development</div>
<div class="a gc" style="right:423.2px;top:434.62px">0.00</div>
<div class="a gc" style="left:608.3px;top:434.62px"></div>
<div class="a gc" style="left:680px;top:434.62px">New</div>
<div class="a gc" style="left:759.7px;top:434.62px">00 Prospect</div>
<div class="a gc" style="left:840.2px;top:434.62px">1/3/2025 5:49 AM</div>
<div class="a" style="left:185px;top:451.60px;width:758.5px;height:21.78px;background:#ffffff;border-bottom:1px solid #edf1f4"></div>
<svg class="a" style="left:210.6px;top:455.50px" width="8" height="13" viewBox="0 0 8 13"><path d="M6.5 4.2V9A2.9 2.9 0 0 1 0.7 9V3.1A2.3 2.3 0 0 1 5.3 3.1V8.7A1.65 1.65 0 0 1 2 8.7V4.2" stroke="#3a3a3a" stroke-width="1.05" fill="none"/></svg>
<svg class="a" style="left:228.6px;top:456.00px" width="11" height="12" viewBox="0 0 11 12"><path d="M2 0.7H6.6L9.6 3.7V10.8Q9.6 11.8 8.6 11.8H2Q1 11.8 1 10.8V1.7Q1 0.7 2 0.7Z" stroke="#333" stroke-width="1.1" fill="none" stroke-linejoin="round"/><path d="M6.6 0.7V3.7H9.6" stroke="#333" stroke-width="1.1" fill="none"/></svg>
<div class="a gc lk" style="left:247.8px;top:455.90px">OP000403</div>
<div class="a gc" style="left:319.7px;top:455.90px">new computers</div>
<div class="a gc" style="right:423.2px;top:455.90px">7,500.00</div>
<div class="a gc" style="left:608.3px;top:455.90px">Other</div>
<div class="a gc" style="left:680px;top:455.90px">New</div>
<div class="a gc" style="left:759.7px;top:455.90px">01 Nurture</div>
<div class="a gc" style="left:840.2px;top:455.90px"></div>
<div class="a" style="left:185px;top:472.88px;width:758.5px;height:21.78px;background:#f5f9fc;border-bottom:1px solid #edf1f4"></div>
<svg class="a" style="left:210.6px;top:476.78px" width="8" height="13" viewBox="0 0 8 13"><path d="M6.5 4.2V9A2.9 2.9 0 0 1 0.7 9V3.1A2.3 2.3 0 0 1 5.3 3.1V8.7A1.65 1.65 0 0 1 2 8.7V4.2" stroke="#3a3a3a" stroke-width="1.05" fill="none"/></svg>
<svg class="a" style="left:228.6px;top:477.28px" width="11" height="12" viewBox="0 0 11 12"><path d="M2 0.7H6.6L9.6 3.7V10.8Q9.6 11.8 8.6 11.8H2Q1 11.8 1 10.8V1.7Q1 0.7 2 0.7Z" stroke="#333" stroke-width="1.1" fill="none" stroke-linejoin="round"/><path d="M6.6 0.7V3.7H9.6" stroke="#333" stroke-width="1.1" fill="none"/></svg>
<div class="a gc lk" style="left:247.8px;top:477.18px">OP000402</div>
<div class="a gc" style="left:319.7px;top:477.18px">new computers</div>
<div class="a gc" style="right:423.2px;top:477.18px">7,500.00</div>
<div class="a gc" style="left:608.3px;top:477.18px">Other</div>
<div class="a gc" style="left:680px;top:477.18px">Lost</div>
<div class="a gc" style="left:759.7px;top:477.18px">03 Develop…</div>
<div class="a gc" style="left:840.2px;top:477.18px"></div>
<div class="a" style="left:185px;top:497px;width:758.5px;height:8px;background:#f0f0f0;border-radius:4px"></div>
<div class="a" style="left:185px;top:497.5px;width:278px;height:7.5px;background:#c8c8c8;border-radius:4px"></div>
<div class="a" style="left:193px;top:513.7px;font-size:11.2px;color:#333">Records 1–12 of 342</div>
<svg class="a" style="left:708px;top:511px" width="13" height="12" viewBox="0 0 13 12"><path d="M1.5 0.5V11M10.5 1L5.5 6L10.5 11" stroke="#bdbdbd" stroke-width="1.2" fill="none"/></svg>
<svg class="a" style="left:745px;top:511px" width="9" height="12" viewBox="0 0 9 12"><path d="M6.5 1L2 6L6.5 11" stroke="#bdbdbd" stroke-width="1.2" fill="none"/></svg>
<div class="a" style="left:767px;top:509.3px;width:39.5px;height:21.5px;border:1px solid #e3e3e3;border-radius:4px;background:#fff"></div>
<div class="a" style="right:224.6px;top:513.8px;font-size:11.2px;color:#222">1</div>
<div class="a" style="left:815px;top:513.8px;font-size:11.1px;color:#333">of 29 pages</div>
<svg class="a" style="left:886px;top:510.5px" width="10" height="12" viewBox="0 0 10 12"><path d="M2.5 1L7.5 6L2.5 11" stroke="#222" stroke-width="1.6" fill="none"/></svg>
<svg class="a" style="left:920px;top:510.5px" width="13" height="12" viewBox="0 0 13 12"><path d="M1.5 1L6.5 6L1.5 11M10.5 0.5V11.5" stroke="#222" stroke-width="1.6" fill="none"/></svg>

<div id="rp"></div>
<svg class="a" style="left:980px;top:110px" width="20" height="21" viewBox="0 0 20 21"><g stroke="#1e7fcb" stroke-width="1.6" fill="none"><path d="M2 1.5L6.3 7.5L10.5 1.5M6.3 7.5V14M2.8 8.3H9.8M2.8 11H9.8"/><path d="M17.6 9.3Q17.2 7.6 15.3 7.6Q13 7.6 13 9.5Q13 11.1 15.3 11.7Q17.8 12.3 17.8 14.2Q17.8 16.2 15.3 16.2Q13.2 16.2 12.7 14.5"/><path d="M15.3 6V7.6M15.3 16.2V19.5"/></g></svg>

<div class="a rpt" style="left:957px;top:132px;width:64px;text-align:center">Opportunities</div>
<svg class="a" style="left:980px;top:165px" width="20" height="17" viewBox="0 0 20 17"><path d="M3.5 16A8.5 8.5 0 1 1 16.5 16Z" stroke="#1e7fcb" stroke-width="1.7" fill="none" stroke-linejoin="round"/><path d="M10 12.5L14 6.5" stroke="#1e7fcb" stroke-width="1.6"/><circle cx="10" cy="12.5" r="1.6" fill="#1e7fcb"/><g stroke="#1e7fcb" stroke-width="0.8"><path d="M4 11H5.2M5 7.3L5.9 8M8 5V6.2M12 5V6.2M15 7.3L14.1 8"/></g></svg>
<div class="a rpt" style="left:957px;top:185px;width:64px;text-align:center;line-height:9.5px">Customer<br>View</div>
<svg class="a" style="left:983px;top:514px" width="9" height="12" viewBox="0 0 9 12"><path d="M6.5 1.5L2.5 6L6.5 10.5" stroke="#555" stroke-width="1.3" fill="none"/></svg>

<div id="task"></div>
<div class="a" style="left:0;top:537px;width:1024px;height:1px;background:#d4cbc8"></div>
<svg class="a" style="left:342px;top:547.5px" width="19" height="19" viewBox="0 0 19 19"><defs><linearGradient id="wl" x1="0" y1="0" x2="1" y2="1"><stop offset="0" stop-color="#3fc0f5"/><stop offset="1" stop-color="#0a78d8"/></linearGradient></defs><rect x="0" y="0" width="9" height="9" fill="url(#wl)"/><rect x="10" y="0" width="9" height="9" fill="url(#wl)"/><rect x="0" y="10" width="9" height="9" fill="url(#wl)"/><rect x="10" y="10" width="9" height="9" fill="url(#wl)"/></svg>
<div class="a" style="left:372px;top:545px;width:175px;height:24.5px;background:#f6f2f0;border:1px solid #ddd5d2;border-radius:12.5px"></div>
<svg class="a" style="left:381px;top:550.5px" width="13" height="13" viewBox="0 0 13 13"><circle cx="5.3" cy="5.3" r="4.2" stroke="#222" stroke-width="1.5" fill="none"/><path d="M8.3 8.3L12 12" stroke="#222" stroke-width="1.7"/></svg>
<div class="a" style="left:402px;top:551px;font-size:11.3px;color:#555;letter-spacing:-0.2px">Search</div>
<svg class="a" style="left:504px;top:546px" width="42" height="22" viewBox="0 0 42 22"><ellipse cx="9" cy="3.5" rx="3.5" ry="1" fill="#c9dcec"/><ellipse cx="24" cy="5" rx="4.5" ry="1.5" fill="#b7d3ea"/><path d="M4 20.5Q4 14 14 13Q24 11 32 13Q38 14 38 19Q38 20.5 34 20.5Z" fill="#9cc99a"/><path d="M10 20.5Q14 16 24 16.5Q34 16 38 19Q38 20.5 34 20.5Z" fill="#6fae7b"/><path d="M30 13Q35 14 38 17" stroke="#4f8f86" stroke-width="1.5" fill="none"/><g stroke="#d9d9d9" stroke-width="0.9"><path d="M12 3V20M22.5 8V17M33 5V20"/><path d="M12 9L6 12M12 9L16 13M22.5 10L19 12M22.5 10L26 8M33 8L28 6M33 8L37 9"/></g></svg>
<div class="a" style="left:557.3px;top:552.8px;width:14.7px;height:12.8px;background:#222;border-radius:1.5px"></div>
<div class="a" style="left:562px;top:548px;width:14.2px;height:12px;background:linear-gradient(135deg,#fafafa,#c8c8c8);border-radius:1.5px"></div>
<svg class="a" style="left:592.5px;top:547.5px" width="20" height="19" viewBox="0 0 20 19"><defs><linearGradient id="ma" x1="0" y1="0" x2="0" y2="1"><stop offset="0" stop-color="#1e6fe6"/><stop offset="0.35" stop-color="#1aa0e6"/><stop offset="0.7" stop-color="#56c05a"/><stop offset="1" stop-color="#f2c21a"/></linearGradient><linearGradient id="mb" x1="0" y1="0" x2="0" y2="1"><stop offset="0" stop-color="#a85ee8"/><stop offset="0.6" stop-color="#ee6aa0"/><stop offset="1" stop-color="#f7823a"/></linearGradient></defs><path d="M11.5 4.5H17Q19.3 4.5 18.8 6.8L17.5 12Q17 14 14.8 14H7Q9 14 9.5 12L10.2 6.2Q10.5 4.5 11.5 4.5Z" fill="url(#mb)"/><path d="M5 0.5H11.5Q13 0.5 12.4 1.8Q10.6 2 10 4.2L9 9.5Q8.4 11.8 6 11.8H2.6Q0.3 11.8 0.9 9.5L2.6 2.8Q3.2 0.5 5 0.5Z" fill="url(#ma)"/><rect x="5.7" y="13.3" width="13.4" height="5.5" rx="1.2" fill="#1a1a1a"/><text x="12.4" y="17.6" font-size="4.6" font-family="Liberation Sans" font-weight="bold" fill="#fff" text-anchor="middle">M365</text></svg>
<svg class="a" style="left:627px;top:547.5px" width="21" height="19" viewBox="0 0 21 19"><path d="M0.5 2.2Q0.5 0.7 2 0.7H6.5Q7.6 0.7 8.3 1.6L9.2 2.6H19Q20.3 2.6 20.3 4V16.6Q20.3 18 19 18H2Q0.5 18 0.5 16.6Z" fill="#e9a514"/><path d="M0.5 4.5H19Q20.3 4.5 20.3 6V16.6Q20.3 18 19 18H2Q0.5 18 0.5 16.6Z" fill="#fdcb3a"/><path d="M3.5 18V13.5Q3.5 12 5 12H15.5Q17 12 17 13.5V18Z" fill="#1f6fd0"/><path d="M6 14.6H14.5" stroke="#4a9ae8" stroke-width="1"/></svg>
<div class="a" style="left:657.7px;top:541.7px;width:29px;height:30.5px;background:#f1eeec;border-radius:4px"></div>
<svg class="a" style="left:662.3px;top:546.7px" width="20" height="20" viewBox="0 0 20 20"><defs><linearGradient id="eg1" x1="0.2" y1="0" x2="0.9" y2="0.7"><stop offset="0" stop-color="#1e9be8"/><stop offset="0.55" stop-color="#2bb6c8"/><stop offset="1" stop-color="#58c965"/></linearGradient><linearGradient id="eg2" x1="0" y1="0" x2="0.6" y2="1"><stop offset="0" stop-color="#1d8fe0"/><stop offset="1" stop-color="#0a4fb0"/></linearGradient></defs><path d="M1.2 9.5Q1.5 1 10 0.8Q18.5 1 19.2 9Q19.2 13 15.5 13.4H10.5Q8 13.4 8 11.2Q8 9 10.8 8.6Q7 7.5 4 9.5Q1.5 11.5 1.2 9.5Z" fill="url(#eg1)"/><path d="M1.2 9.5Q2 5.8 6 5.6Q9.5 5.6 10.8 8.6Q8 9 8 11.2Q8.3 14.5 13 14.3Q16.5 14 18.2 12.5Q16.5 19 10 19.2Q1 19 1.2 9.5Z" fill="url(#eg2)"/><path d="M10.8 8.6Q8 9 8 11.2Q8.2 13.4 10.5 13.4H15.5Q17 13.3 18.2 12.5Q16.5 14 13 14.3Q8.3 14.5 8 11.2" fill="#e8f2f6"/></svg>
<div class="a" style="left:666.5px;top:569.5px;width:12.5px;height:2.6px;background:#1a72d0;border-radius:2px"></div>
<svg class="a" style="left:805px;top:553px" width="11" height="7" viewBox="0 0 11 7"><path d="M1 6L5.5 1.5L10 6" stroke="#222" stroke-width="1.2" fill="none"/></svg>
<svg class="a" style="left:828px;top:550px" width="16" height="14" viewBox="0 0 16 14"><path d="M4 11.5H12Q15 11.5 15 8.5Q15 5.8 12.3 5.6Q11.6 2.5 8.3 2.5Q5.5 2.5 4.6 5.2Q1 5.4 1 8.5Q1 11.5 4 11.5Z" fill="#c9c9c9" stroke="#333" stroke-width="1.1"/><path d="M2 1L14 13" stroke="#333" stroke-width="1.2"/></svg>
<svg class="a" style="left:853px;top:552px" width="16" height="10" viewBox="0 0 16 10"><path d="M2.5 7.5L6 4L9 7L13.5 2.5" stroke="#4a4a4a" stroke-width="1.7" fill="none" stroke-linejoin="round"/><circle cx="2.2" cy="7.8" r="1.7" fill="#f5891f"/><circle cx="13.8" cy="2.3" r="1.8" fill="#5cb8e6"/></svg>
<svg class="a" style="left:879px;top:549px" width="16" height="16" viewBox="0 0 16 16"><path d="M9 2.5H1.5V11.5H12V7" stroke="#222" stroke-width="1.1" fill="none"/><path d="M5 14.5H9M7 11.5V14.5" stroke="#222" stroke-width="1.1"/><rect x="10.5" y="1" width="3.5" height="4.5" rx="1" stroke="#222" stroke-width="1" fill="none"/><path d="M12.2 5.5V9" stroke="#222" stroke-width="1"/></svg>
<svg class="a" style="left:899px;top:550.5px" width="15" height="13" viewBox="0 0 15 13"><path d="M1 4.5H3.5L7 1.5V11.5L3.5 8.5H1Z" stroke="#222" stroke-width="1" fill="none"/><path d="M9 4.5Q10 6.5 9 8.5M10.8 3Q12.5 6.5 10.8 10M12.6 1.5Q15 6.5 12.6 11.5" stroke="#222" stroke-width="1" fill="none"/></svg>
<svg class="a" style="left:917px;top:549px" width="17" height="14" viewBox="0 0 17 14"><rect x="1.3" y="4.3" width="12.6" height="8" rx="1.3" stroke="#333" stroke-width="1.2" fill="none"/><rect x="3.2" y="6.2" width="8.8" height="4.2" fill="#2a2a2a"/><path d="M14.5 6.8L16 8.3L14.5 9.8Z" fill="#333"/><path d="M4.5 0.8L3.3 4H5.3L4.2 7" stroke="#333" stroke-width="1" fill="none"/></svg>
<div class="a" style="right:35px;top:544.4px;font-size:10px;color:#2a2a2a;text-align:right;line-height:12.5px">9:41 AM<br>1/26/2026</div>
<svg class="a" style="left:995px;top:549px" width="14" height="15" viewBox="0 0 14 15"><path d="M2.2 11.2V7.2Q2.2 3 6.5 3Q8 3 9 3.6M10.8 6.5V11.2H12V12.3H1V11.2H2.2" stroke="#222" stroke-width="1.5" fill="none"/><path d="M4 6.5Q4 5 6 5H7.5" stroke="#222" stroke-width="1"/><circle cx="6.5" cy="13.8" r="1.1" fill="#222"/><path d="M5.5 7.5H8.5L5.5 10.5H8.5" stroke="#222" stroke-width="1" fill="none"/><path d="M10 0.8H12.8L10 3.8H12.8" stroke="#222" stroke-width="0.9" fill="none"/></svg>
<svg class="a" style="left:173px;top:96px" width="12" height="16" viewBox="0 0 12 16"><path d="M0.8 0.8V12.6L3.6 10L5.6 14.6L7.6 13.7L5.6 9.2H9.4Z" fill="#fff" stroke="#555" stroke-width="0.9" stroke-linejoin="round"/></svg>

</body></html>
